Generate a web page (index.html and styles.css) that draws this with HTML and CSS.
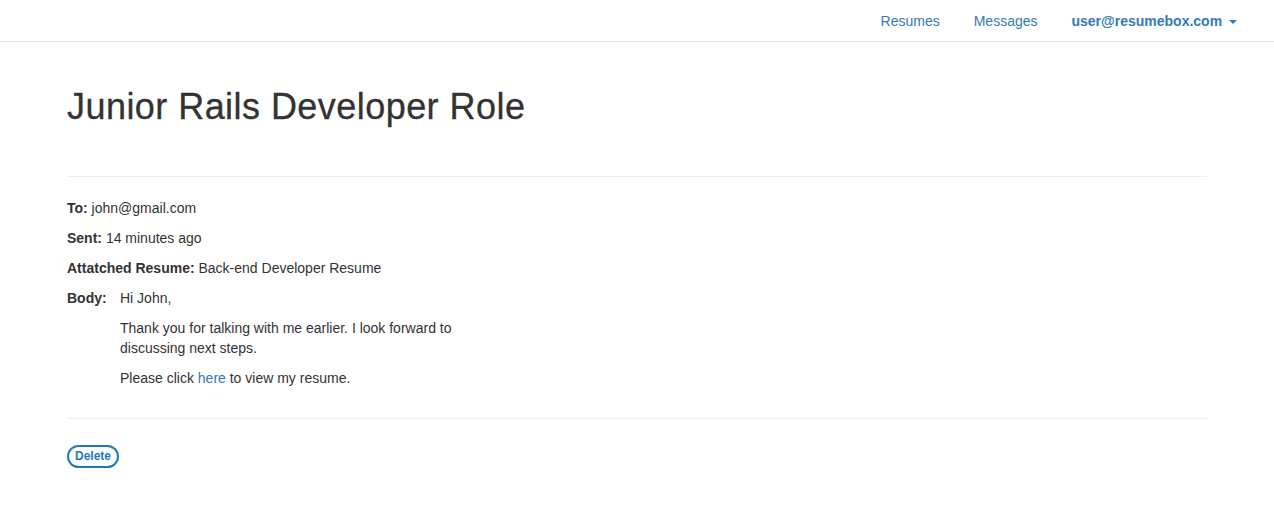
FILE: index.html
```html
<!DOCTYPE html>
<html lang="en">
<head>
<meta charset="utf-8">
<title>Junior Rails Developer Role</title>
<link rel="stylesheet" href="styles.css">
</head>
<body>
<header class="navbar">
  <nav class="nav">
    <a class="nav-link" href="#">Resumes</a>
    <a class="nav-link" href="#">Messages</a>
    <a class="nav-link nav-user" href="#">user@resumebox.com <span class="caret"></span></a>
  </nav>
</header>
<main class="container">
  <h1 class="title">Junior Rails Developer Role</h1>
  <hr class="rule">
  <section class="details">
    <p class="field"><b>To:</b> john@gmail.com</p>
    <p class="field"><b>Sent:</b> 14 minutes ago</p>
    <p class="field"><b>Attatched Resume:</b> Back-end Developer Resume</p>
    <div class="body-row">
      <b class="body-label">Body:</b>
      <div class="body-text">
        <p class="field">Hi John,</p>
        <p class="field">Thank you for talking with me earlier. I look forward to discussing next steps.</p>
        <p class="field">Please click <a class="link" href="#">here</a> to view my resume.</p>
      </div>
    </div>
  </section>
  <hr class="rule">
  <div class="actions">
    <button class="btn-delete" type="button">Delete</button>
  </div>
</main>
</body>
</html>
```
FILE: styles.css
```css
* { box-sizing: border-box; }
html, body { margin: 0; padding: 0; }
body {
  font-family: "Liberation Sans", Arial, Helvetica, sans-serif;
  font-size: 14px;
  line-height: 20px;
  color: #333;
  background: #fff;
}
.navbar {
  height: 42px;
  border-bottom: 1px solid #e7e7e7;
  display: flex;
  justify-content: flex-end;
  padding-right: 20px;
}
.nav { display: flex; }
.nav-link {
  display: block;
  padding: 11px 17px 10px;
  color: #337ab7;
  text-decoration: none;
}
.nav-user { font-weight: bold; }
.caret {
  display: inline-block;
  width: 0;
  height: 0;
  margin-left: 3px;
  vertical-align: middle;
  border-top: 4px solid #337ab7;
  border-left: 4px solid transparent;
  border-right: 4px solid transparent;
}
.container {
  width: 1140px;
  margin: 0 auto;
}
.title {
  margin: 45px 0 49px;
  font-size: 36px;
  line-height: 40px;
  font-weight: 500;
  letter-spacing: 0.45px;
  color: #333;
  -webkit-text-stroke: 0.3px #333;
}
.rule {
  margin: 20px 0;
  border: 0;
  border-top: 1px solid #eee;
}
.details { padding-top: 1px; }
.field { margin: 0 0 10px; }
.body-row { display: flex; }
.body-label { width: 53px; flex: none; }
.body-text { width: 345px; }
.link { color: #337ab7; text-decoration: none; }
.actions { padding-top: 6px; }
.btn-delete {
  font-family: "Liberation Sans", Arial, Helvetica, sans-serif;
  font-size: 12px;
  font-weight: bold;
  color: #1f7bb6;
  background: #fff;
  border: 2px solid #1f7bb6;
  border-radius: 12px;
  height: 23px;
  width: 52px;
  padding: 0;
  line-height: 19px;
  cursor: pointer;
}
```
